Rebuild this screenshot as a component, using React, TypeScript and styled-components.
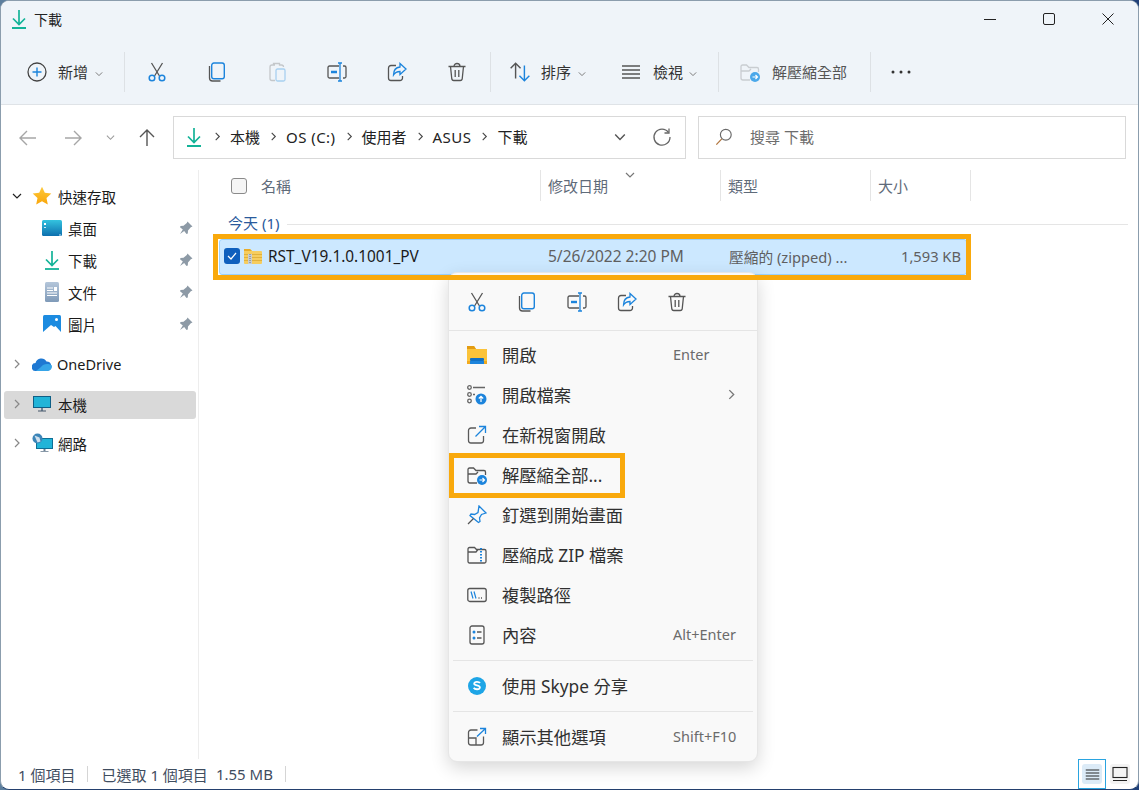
import { ReactNode } from "react";
import styled, { createGlobalStyle } from "styled-components";

const GlobalStyle = createGlobalStyle`
  html, body {
    margin: 0;
    padding: 0;
    height: 790px;
    overflow: hidden;
    background: linear-gradient(90deg, #5d7f9e 0%, #7aa6c4 40%, #1f5fae 70%, #8b9dad 85%, #1f3f78 100%);
  }
  * { box-sizing: border-box; }
  #root {
    font-family: "Noto Sans", "Noto Sans CJK TC", sans-serif;
    color: #1a1a1a;
  }
`;

const Window = styled.div`
  position: relative;
  width: 1139px;
  height: 790px;
  display: flex;
  flex-direction: column;
  background: #fff;
  border-radius: 9px;
  border-top: 1px solid #8b9dad;
  border-left: 1px solid #8b9dad;
  border-right: 1px solid #8b9dad;
  border-bottom: 1px solid #24406e;
  overflow: hidden;
`;

const TopArea = styled.div`
  height: 104px;
  background: #eff4f9;
  border-bottom: 1px solid #dfe3e7;
  display: flex;
  flex-direction: column;
  flex: none;
`;

const TitleBar = styled.div`
  height: 36px;
  display: flex;
  align-items: center;
  padding-left: 8px;
  flex: none;
`;

const TitleText = styled.span`
  font-size: 14px;
  margin-left: 5px;
  margin-top: -1px;
  color: #222;
`;

const WindowControls = styled.div`
  margin-left: auto;
  display: flex;
`;

const WindowControl = styled.div`
  width: 59px;
  height: 36px;
  display: flex;
  align-items: center;
  justify-content: center;
  padding-right: 2px;
`;

const Toolbar = styled.div`
  height: 67px;
  display: flex;
  align-items: center;
  padding-top: 2px;
`;

const Separator = styled.div`
  width: 1px;
  height: 40px;
  background: #dde1e5;
  flex: none;
`;

const LabelButton = styled.div<{ $width: number; $pad: number; $dim?: boolean }>`
  width: ${(p) => p.$width}px;
  padding-left: ${(p) => p.$pad}px;
  display: flex;
  align-items: center;
  font-size: 15px;
  color: ${(p) => (p.$dim ? "#555" : "#333")};
  flex: none;
`;

const LabelText = styled.span<{ $gap: number }>`
  margin-left: ${(p) => p.$gap}px;
  white-space: nowrap;
`;

const IconButton = styled.div<{ $width?: number }>`
  width: ${(p) => p.$width ?? 60}px;
  display: flex;
  justify-content: center;
  align-items: center;
  flex: none;
`;

const IconGroup = styled.div`
  display: flex;
  padding-left: 2px;
  width: 365px;
  flex: none;
`;

const NavRow = styled.div`
  height: 65px;
  flex: none;
  display: flex;
  align-items: center;
`;

const NavButtons = styled.div`
  width: 172px;
  display: flex;
  align-items: center;
  padding-left: 5px;
  flex: none;
`;

const NavButton = styled.div<{ $width: number }>`
  width: ${(p) => p.$width}px;
  display: flex;
  justify-content: center;
  flex: none;
`;

const AddressBar = styled.div`
  width: 513px;
  height: 43px;
  border: 1px solid #d9d9d9;
  display: flex;
  align-items: center;
  padding: 0 13px 2px 10px;
  font-size: 15px;
  flex: none;
`;

const Crumb = styled.span`
  display: flex;
  align-items: center;
  color: #222;
  white-space: nowrap;
`;

const CrumbLatin = styled.span`
  letter-spacing: 0.45px;
`;

const CrumbSep = styled.span`
  display: flex;
  margin: 0 8px 0 9px;
`;

const AddressEnd = styled.div`
  margin-left: auto;
  display: flex;
  align-items: center;
  gap: 26px;
`;

const SearchBox = styled.div`
  width: 428px;
  height: 43px;
  margin-left: 12px;
  border: 1px solid #d9d9d9;
  display: flex;
  align-items: center;
  padding: 0 0 2px 16px;
  font-size: 15px;
  color: #6d6d6d;
  gap: 17px;
  flex: none;
`;

const Main = styled.div`
  flex: 1;
  display: flex;
  min-height: 0;
`;

const Sidebar = styled.div`
  width: 198px;
  border-right: 1px solid #ededed;
  padding: 10px 0 0 3px;
  flex: none;
`;

const TreeRow = styled.div<{ $selected?: boolean; $gapTop?: number; $height?: number }>`
  height: ${(p) => p.$height ?? 32}px;
  margin-top: ${(p) => p.$gapTop ?? 0}px;
  width: 192px;
  border-radius: 3px;
  background: ${(p) => (p.$selected ? "#d9d9d9" : "transparent")};
  padding-bottom: ${(p) => (p.$selected ? 2 : 0)}px;
  display: flex;
  align-items: center;
  font-size: 14.5px;
`;

const Caret = styled.div`
  width: 26px;
  display: flex;
  justify-content: center;
  flex: none;
`;

const TreeIcon = styled.div<{ $indent?: number }>`
  width: 26px;
  margin-left: ${(p) => p.$indent ?? 0}px;
  display: flex;
  justify-content: center;
  flex: none;
`;

const TreeLabel = styled.span<{ $indent?: number }>`
  margin-left: ${(p) => p.$indent ?? 2}px;
  white-space: nowrap;
`;

const PinSlot = styled.div`
  margin-left: auto;
  margin-right: 3px;
  display: flex;
`;

const Content = styled.div`
  flex: 1;
  min-width: 0;
  padding-right: 10px;
`;

const HeaderRow = styled.div`
  height: 31px;
  display: grid;
  grid-template-columns: 342px 180px 150px 100px;
  font-size: 15px;
  color: #5f6b7a;
  position: relative;
`;

const HeaderCell = styled.div<{ $first?: boolean }>`
  display: flex;
  align-items: center;
  padding-left: ${(p) => (p.$first ? 32 : 7)}px;
  border-right: 1px solid #e5e5e5;
  gap: 14px;
`;

const BoxCheck = styled.div`
  width: 16px;
  height: 16px;
  border: 1px solid #8a8a8a;
  border-radius: 3px;
  background: #f5f5f5;
  flex: none;
`;

const SortCaret = styled.div`
  position: absolute;
  left: 426px;
  top: 0;
  display: flex;
`;

const GroupRow = styled.div`
  height: 42px;
  display: flex;
  align-items: center;
  padding-left: 29px;
  font-size: 15px;
  color: #2a5a9c;
  gap: 8px;
`;

const GroupLine = styled.div`
  flex: 1;
  height: 1px;
  background: #e5e5e5;
  margin-top: 4px;
`;

const FileRow = styled.div`
  position: relative;
  margin-left: 20px;
  margin-top: -4px;
  width: 748px;
  height: 36px;
  padding-bottom: 2px;
  background: #cce8ff;
  border: 1px solid #99d1ff;
  border-radius: 3px;
  display: grid;
  grid-template-columns: 328px 181px 142px 1fr;
  align-items: center;
  font-size: 14.7px;
`;

const FileName = styled.div`
  display: flex;
  align-items: center;
  padding-left: 4px;
  color: #1a1a1a;
`;

const FileNameText = styled.span`
  margin-left: 6px;
  font-size: 15.4px;
`;

const FileDate = styled.div`
  color: #5f5f5f;
  font-size: 15.5px;
  white-space: nowrap;
`;

const FileCell = styled.div<{ $right?: boolean }>`
  color: #5f5f5f;
  white-space: nowrap;
  text-align: ${(p) => (p.$right ? "right" : "left")};
  padding-right: ${(p) => (p.$right ? 5 : 0)}px;
`;

const CheckedBox = styled.div`
  width: 16px;
  height: 16px;
  margin-right: 4px;
  border-radius: 3px;
  background: #0f5fbd;
  display: flex;
  align-items: center;
  justify-content: center;
  flex: none;
`;

const Marker = styled.div`
  position: absolute;
  border: 5px solid #f9a90c;
  z-index: 3;
  pointer-events: none;
`;

const RowMarker = styled(Marker)`
  inset: -6px -5px -6px -7px;
`;

const StatusBar = styled.div`
  height: 30px;
  flex: none;
  display: flex;
  align-items: center;
  font-size: 15px;
  color: #3f4d5f;
  padding-left: 17px;
  position: relative;
`;

const StatusDivider = styled.div`
  width: 1px;
  height: 16px;
  background: #d5d5d5;
  margin: 0 13px 0 12px;
`;

const StatusSize = styled.span`
  margin-left: 8px;
`;

const ViewToggles = styled.div`
  margin-left: auto;
  display: flex;
  align-items: center;
  gap: 4px;
  margin-right: 8px;
`;

const ActiveToggle = styled.div`
  width: 28px;
  height: 30px;
  padding: 4px 3px;
  border: 1px solid #2aa4e0;
  display: flex;
`;

const ActiveToggleFill = styled.div`
  flex: 1;
  border-radius: 3px;
  background: #dcebf7;
  display: flex;
  align-items: center;
  justify-content: center;
`;

const PlainToggle = styled.div`
  width: 20px;
  height: 20px;
  border-radius: 3px;
  background: #f3f3f3;
  display: flex;
  align-items: center;
  justify-content: center;
`;

const Menu = styled.div`
  position: absolute;
  left: 447px;
  top: 271px;
  width: 310px;
  height: 490px;
  background: #f9f9f9;
  border: 1px solid #e6e6e6;
  border-radius: 9px;
  box-shadow: 0 6px 18px rgba(0, 0, 0, 0.16);
  z-index: 2;
  display: flex;
  flex-direction: column;
  padding-top: 1px;
`;

const MenuIcons = styled.div`
  height: 57px;
  display: flex;
  align-items: center;
  padding-left: 3px;
  border-bottom: 1px solid #e5e5e5;
  flex: none;
`;

const MenuIconButton = styled.div`
  width: 50px;
  display: flex;
  justify-content: center;
`;

const MenuItem = styled.div<{ $height?: number }>`
  position: relative;
  height: ${(p) => p.$height ?? 40}px;
  display: flex;
  align-items: center;
  padding: 0 19px 0 16px;
  font-size: 17.3px;
  color: #303030;
  flex: none;
`;

const MenuFootItem = styled(MenuItem)`
  padding-bottom: 2px;
`;

const MenuItemIcon = styled.div`
  width: 24px;
  height: 24px;
  display: flex;
  align-items: center;
  justify-content: center;
  margin-right: 13px;
  margin-top: 2px;
  flex: none;
`;

const MenuItemKey = styled.span`
  margin-left: auto;
  width: 65px;
  font-size: 14.5px;
  color: #6b6b6b;
`;

const MenuItemArrow = styled.span`
  margin-left: auto;
  display: flex;
  margin-right: 1px;
`;

const MenuDivider = styled.div`
  height: 1px;
  margin: 0 4px;
  background: #e5e5e5;
  flex: none;
`;

const MenuItemMarker = styled(Marker)`
  left: 0;
  top: -1px;
  width: 176px;
  height: 45px;
`;

const MenuItems = styled.div`
  padding: 3px 0 6px;
  flex: none;
`;

const Ink = { blue: "#1c84dc", grey: "#5a5a5a", teal: "#13b398" };

const Svg = ({ size = 20, children }: { size?: number; children: ReactNode }) => (
  <svg width={size} height={size} viewBox="0 0 20 20" fill="none" strokeWidth="1.3">
    {children}
  </svg>
);

const DownloadIcon = ({ size = 20 }: { size?: number }) => (
  <Svg size={size}>
    <path d="M10 1v14M4 9.500l6 6 6-6" stroke={Ink.teal} strokeWidth="1.700" />
    <path d="M3 19h14" stroke={Ink.teal} strokeWidth="1.800" />
  </Svg>
);

const PlusCircle = () => (
  <Svg>
    <circle cx="10" cy="10" r="9" stroke="#444" />
    <path d="M10 5.500v9M5.500 10h9" stroke={Ink.blue} strokeWidth="1.400" />
  </Svg>
);

const CutIcon = () => (
  <Svg>
    <path d="M4.500 1l8 13M15.500 1l-8 13" stroke="#555" />
    <circle cx="5" cy="16" r="2.800" stroke={Ink.blue} strokeWidth="1.500" />
    <circle cx="15" cy="16" r="2.800" stroke={Ink.blue} strokeWidth="1.500" />
  </Svg>
);

const CopyIcon = () => (
  <Svg>
    <path d="M2.500 4v12a3 3 0 0 0 3 3h8" stroke="#555" />
    <rect x="4.700" y="1" width="12.600" height="15.800" rx="2.200" stroke={Ink.blue} strokeWidth="1.400" />
  </Svg>
);

const PasteIcon = () => (
  <Svg>
    <path d="M8 3H5a2 2 0 0 0-2 2v11.500A2 2 0 0 0 5 18.500h3M6.500 3V1.500h6V3h2a2 2 0 0 1 2 2" stroke="#c4c7ca" />
    <rect x="9" y="7" width="9" height="12" rx="1.500" stroke="#a8d0f0" />
  </Svg>
);

const RenameIcon = () => (
  <Svg>
    <path d="M12 4H2.500A1.500 1.500 0 0 0 1 5.500v9A1.500 1.500 0 0 0 2.500 16H12M16 4h1.500A1.500 1.500 0 0 1 19 5.500v9a1.500 1.500 0 0 1-1.500 1.500H16" stroke="#555" />
    <path d="M4 10h6" stroke={Ink.blue} strokeWidth="2.400" />
    <path d="M11 1h4M13 1v18M11 19h4" stroke={Ink.blue} strokeWidth="1.300" />
  </Svg>
);

const ShareIcon = () => (
  <Svg>
    <path d="M9 3.500H4A2.500 2.500 0 0 0 1.500 6v10A2.500 2.500 0 0 0 4 18.500h9a2.500 2.500 0 0 0 2.500-2.500v-2" stroke="#555" />
    <path d="M13 1.500l6 5.500-6 5.500V9.500c-3 0-5 1-6.500 3.500 0-4.500 2.500-7.500 6.500-8z" stroke={Ink.blue} />
  </Svg>
);

const TrashIcon = () => (
  <Svg>
    <path d="M1.500 4.500h17M7 4.500c0-4 6-4 6 0M3.500 4.500l1.300 12.500a2 2 0 0 0 2 1.500h6.400a2 2 0 0 0 2-1.500l1.300-12.500" stroke="#555" />
    <path d="M8.200 8v7M11.800 8v7" stroke="#555" />
  </Svg>
);

const SortIcon = () => (
  <Svg size={22}>
    <path d="M6 16V2M1.500 6.500L6 2l4.500 4.500" stroke="#555" />
    <path d="M14 4v14M9.500 13.500L14 18l4.500-4.500" stroke={Ink.blue} />
  </Svg>
);

const LinesIcon = ({ size = 20, color = "#555" }: { size?: number; color?: string }) => (
  <Svg size={size}>
    <path d="M1 4h18M1 8h18M1 12h18M1 16h18" stroke={color} />
  </Svg>
);

const ExtractFolder = ({ muted }: { muted?: boolean }) => (
  <Svg>
    <path
      d="M1 16V4.500A1.500 1.500 0 0 1 2.500 3h4l2.500 2.500h8A1.500 1.500 0 0 1 18.500 7v3M1 16a2 2 0 0 0 2 2h7M1 9h8l2-2"
      stroke={muted ? "#c9cdd1" : "#555"}
    />
    <circle cx="15" cy="15" r="5" fill={muted ? "#4ba8ea" : Ink.blue} />
    <path d="M12.500 15h5M15.500 13l2 2-2 2" stroke="#fff" strokeWidth="1.200" />
  </Svg>
);

const Chevron = ({ dir = "down", color = "#555", size = 10 }: { dir?: "down" | "right"; color?: string; size?: number }) => (
  <svg width={size} height={size} viewBox="0 0 10 10" fill="none" stroke={color} strokeWidth="1.200">
    {dir === "down" ? <path d="M1 3l4 4 4-4" /> : <path d="M3 1l4 4-4 4" />}
  </svg>
);

const ArrowIcon = ({ d, color }: { d: string; color: string }) => (
  <Svg>
    <path d={d} stroke={color} strokeWidth="1.400" />
  </Svg>
);

const RefreshIcon = () => (
  <Svg>
    <path d="M16.500 5.500A8 8 0 1 0 18 10" stroke="#666" strokeWidth="1.300" />
    <path d="M17 1.500v4.500h-4.500" stroke="#666" strokeWidth="1.300" />
  </Svg>
);

const SearchIcon = () => (
  <Svg size={18}>
    <circle cx="12" cy="7.500" r="6" stroke="#6a6a6a" />
    <path d="M7.500 12L1.500 18.500" stroke="#b0743c" />
  </Svg>
);

const StarIcon = () => (
  <svg width="20" height="20" viewBox="0 0 20 20">
    <defs>
      <linearGradient id="starFill" x1="0" y1="0" x2="0" y2="1">
        <stop offset="0" stopColor="#fdc93a" />
        <stop offset="1" stopColor="#f9a60b" />
      </linearGradient>
    </defs>
    <path d="M10 .8l2.800 6 6.500.8-4.800 4.500 1.300 6.500L10 15.300 4.200 18.600l1.300-6.500L.7 7.600l6.500-.8z" fill="url(#starFill)" />
  </svg>
);

const DesktopIcon = () => (
  <svg width="20" height="16" viewBox="0 0 20 16">
    <defs>
      <linearGradient id="deskFill" x1="0" y1="0" x2="0" y2="1">
        <stop offset="0" stopColor="#34c3df" />
        <stop offset="1" stopColor="#0d6fae" />
      </linearGradient>
    </defs>
    <rect width="20" height="16" rx="1.500" fill="url(#deskFill)" />
    <rect x="2" y="3" width="2" height="2" fill="#fff" />
    <rect x="2" y="7" width="2" height="1" fill="#cdeaf5" />
    <rect x="17" y="14.500" width="2" height="1" fill="#cdeaf5" />
  </svg>
);

const DocIcon = () => (
  <svg width="14" height="20" viewBox="0 0 14 20">
    <defs>
      <linearGradient id="docFill" x1="0" y1="0" x2="0" y2="1">
        <stop offset="0" stopColor="#b4c6da" />
        <stop offset="1" stopColor="#7f9ab8" />
      </linearGradient>
    </defs>
    <rect width="14" height="20" rx="1.500" fill="url(#docFill)" />
    <path d="M2 6h6M2 8.500h6M2 11h10M2 13.500h10" stroke="#fff" strokeWidth="1" />
    <rect x="9" y="5" width="3" height="4" fill="#fff" />
  </svg>
);

const PictureIcon = () => (
  <svg width="18" height="18" viewBox="0 0 18 18">
    <rect width="18" height="18" rx="1.500" fill="#1c8be0" />
    <path d="M0 17l8-7 3 2 1.500-1 5.500 6v1H0z" fill="#fff" />
    <circle cx="13.500" cy="4.500" r="1.500" fill="#fff" />
  </svg>
);

const CloudIcon = () => (
  <svg width="20" height="14" viewBox="0 0 20 14">
    <path d="M4 14a4 4 0 0 1-.5-8A6 6 0 0 1 14.500 4.500 4.800 4.800 0 0 1 15.500 14z" fill="#1e78d2" />
    <path d="M4 14h11.500a4.500 4.500 0 0 0 4.300-5.500C16 6 11 7 9 10z" fill="#36a5e8" />
  </svg>
);

const MonitorIcon = () => (
  <svg width="18" height="16" viewBox="0 0 18 16">
    <rect width="18" height="12" fill="#0f5f86" />
    <rect x="1" y="1" width="16" height="10" fill="#22b4d8" />
    <rect x="8" y="12" width="2" height="3" fill="#6d8296" />
    <rect x="5" y="14.500" width="8" height="1" fill="#44576a" />
  </svg>
);

const NetworkIcon = () => (
  <svg width="21" height="20" viewBox="0 0 21 20">
    <rect x="4" y="5" width="17" height="11" fill="#0f6f96" />
    <rect x="5" y="6" width="15" height="9" fill="#22b4d8" />
    <rect x="11.500" y="16" width="2" height="2.500" fill="#6d8296" />
    <rect x="8.500" y="18" width="8" height="1" fill="#8899a8" />
    <circle cx="5.500" cy="5.500" r="5" fill="#3c85b8" />
    <path d="M2.500 2.500l5 2 1 4-3 1z" fill="#cfe0ee" />
  </svg>
);

const PinIcon = () => (
  <svg width="14" height="14" viewBox="0 0 14 14">
    <path d="M8.500.5l5 5-1.700.7-2.800 3.300-.2 3-1.300.5-2.300-2.900L1 13l2.800-4.400L1 6.300l.5-1.300 3-.2 3.300-2.800z" fill="#8d9aa6" />
  </svg>
);

const ZipFolderIcon = () => (
  <svg width="18" height="15" viewBox="0 0 18 15">
    <path d="M0 1a1 1 0 0 1 1-1h5l2 2h9a1 1 0 0 1 1 1v11a1 1 0 0 1-1 1H1a1 1 0 0 1-1-1z" fill="#f6cd5f" />
    <path d="M0 0h6l2 2H0z" fill="#e8ac2a" />
    <path d="M0 5.500h18M0 8.500h18M0 11.500h18" stroke="#d8a52e" strokeWidth=".7" />
    <rect x="4" y="5" width="4" height="10" fill="#c9cdd0" />
    <path d="M6 5v10" stroke="#6e7276" strokeDasharray="1 1" />
  </svg>
);

const OpenFolderIcon = () => (
  <svg width="20" height="18" viewBox="0 0 20 18">
    <path d="M0 1a1 1 0 0 1 1-1h6l2 3h11v14a1 1 0 0 1-1 1H0z" fill="#fbc33a" />
    <path d="M0 0h7l2 3H0z" fill="#e39c12" />
    <rect x="3" y="12" width="14" height="3" rx="1" fill="#1170c4" />
    <rect x="0" y="15" width="20" height="3" fill="#f2aa1e" />
    <rect x="3" y="15" width="14" height="3" fill="#1c84dc" />
  </svg>
);

const OpenWithIcon = () => (
  <Svg>
    <path d="M6 2.500h12M6 9.500h2" stroke="#666" />
    <circle cx="2.500" cy="2.500" r="1.800" stroke="#666" />
    <circle cx="2.500" cy="9.500" r="1.800" stroke="#666" />
    <circle cx="2.500" cy="16" r="1.800" stroke="#666" />
    <circle cx="14" cy="14" r="5.500" fill={Ink.blue} />
    <path d="M14 17v-5.500M11.800 13.500l2.200-2.200 2.200 2.200" stroke="#fff" strokeWidth="1.200" />
  </Svg>
);

const NewWindowIcon = () => (
  <Svg>
    <path d="M9 3H4a2.500 2.500 0 0 0-2.500 2.500v10A2.500 2.500 0 0 0 4 18h10a2.500 2.500 0 0 0 2.500-2.500V11" stroke="#5a5a5a" />
    <path d="M8.500 11.500L18 2M12 1.500h6.500V8" stroke={Ink.blue} />
  </Svg>
);

const PinOutlineIcon = () => (
  <Svg>
    <path d="M12 1l7 7-4.500 1.500-2 3.500.5 3.500-1.500 1L3 10.500l1-1.500 3.500.5 3.500-2z" stroke={Ink.blue} />
    <path d="M6.500 13.500L1 19" stroke="#555" />
  </Svg>
);

const ZipMenuIcon = () => (
  <Svg>
    <path d="M1 16.500V4A1.500 1.500 0 0 1 2.500 2.500h5l2 2h8A1.500 1.500 0 0 1 19 6v10.500A1.500 1.500 0 0 1 17.500 18h-15A1.500 1.500 0 0 1 1 16.500zM1 7h8l2-2.500" stroke="#555" />
    <path d="M14 3v15" stroke={Ink.blue} strokeWidth="2" strokeDasharray="1.500 1.500" />
  </Svg>
);

const CopyPathIcon = () => (
  <Svg>
    <rect x=".8" y="3.500" width="18.400" height="13" rx="2" stroke="#555" />
    <path d="M4 6.500l2 7M7 6.500l2 7" stroke={Ink.blue} strokeWidth="1.200" />
    <path d="M11.500 13h1M14 13h1" stroke="#555" strokeWidth="1.300" />
  </Svg>
);

const PropsIcon = () => (
  <Svg>
    <rect x="3" y="1" width="14" height="18" rx="2" stroke="#555" />
    <circle cx="7" cy="7" r="1.500" fill={Ink.blue} />
    <circle cx="7" cy="13" r="1.500" fill={Ink.blue} />
    <path d="M10 7h4.500M10 13h4.500" stroke="#555" />
  </Svg>
);

const SkypeIcon = () => (
  <svg width="20" height="20" viewBox="0 0 20 20">
    <circle cx="10" cy="10" r="9" fill="#1ea5e6" />
    <path d="M13 7c-1-1.500-5.500-1.800-5.800.5-.2 2.400 5.800 1.300 5.700 4-.2 2.300-5 2.300-6.200.3" stroke="#fff" strokeWidth="1.800" fill="none" />
  </svg>
);

const MoreIcon = () => (
  <Svg>
    <path d="M10.500 3H4a2.500 2.500 0 0 0-2.500 2.500v10A2.500 2.500 0 0 0 4 18h10a2.500 2.500 0 0 0 2.500-2.500V9.500M1.500 11H9v7" stroke="#5a5a5a" />
    <path d="M10 9.500L18 2M13 1.500h5.500V7" stroke={Ink.blue} />
  </Svg>
);

const sidebarPinned = [
  { icon: <DesktopIcon />, label: "桌面" },
  { icon: <DownloadIcon />, label: "下載" },
  { icon: <DocIcon />, label: "文件" },
  { icon: <PictureIcon />, label: "圖片" },
];

const menuMain: { icon: ReactNode; label: string; key?: string; arrow?: boolean; mark?: boolean }[] = [
  { icon: <OpenFolderIcon />, label: "開啟", key: "Enter" },
  { icon: <OpenWithIcon />, label: "開啟檔案", arrow: true },
  { icon: <NewWindowIcon />, label: "在新視窗開啟" },
  { icon: <ExtractFolder />, label: "解壓縮全部...", mark: true },
  { icon: <PinOutlineIcon />, label: "釘選到開始畫面" },
  { icon: <ZipMenuIcon />, label: "壓縮成 ZIP 檔案" },
  { icon: <CopyPathIcon />, label: "複製路徑" },
  { icon: <PropsIcon />, label: "內容", key: "Alt+Enter" },
];

const crumbs = [
  { label: "本機" },
  { label: "OS (C:)", latin: true },
  { label: "使用者" },
  { label: "ASUS", latin: true },
  { label: "下載" },
];

export default function App() {
  return (
    <Window>
      <GlobalStyle />
      <TopArea>
        <TitleBar>
          <DownloadIcon />
          <TitleText>下載</TitleText>
          <WindowControls>
            <WindowControl>
              <svg width="12" height="12" viewBox="0 0 12 12" stroke="#222" strokeWidth="1">
                <path d="M0 6.500h12" />
              </svg>
            </WindowControl>
            <WindowControl>
              <svg width="12" height="12" viewBox="0 0 12 12" fill="none" stroke="#222" strokeWidth="1">
                <rect x=".5" y=".5" width="11" height="11" rx="1.500" />
              </svg>
            </WindowControl>
            <WindowControl>
              <svg width="12" height="12" viewBox="0 0 12 12" stroke="#222" strokeWidth="1">
                <path d="M.5.500l11 11M11.500.500l-11 11" />
              </svg>
            </WindowControl>
          </WindowControls>
        </TitleBar>
        <Toolbar>
          <LabelButton $width={123} $pad={26}>
            <PlusCircle />
            <LabelText $gap={11}>新增</LabelText>
            <LabelText $gap={7}>
              <Chevron size={8} color="#777" />
            </LabelText>
          </LabelButton>
          <Separator />
          <IconGroup>
            <IconButton><CutIcon /></IconButton>
            <IconButton><CopyIcon /></IconButton>
            <IconButton><PasteIcon /></IconButton>
            <IconButton><RenameIcon /></IconButton>
            <IconButton><ShareIcon /></IconButton>
            <IconButton><TrashIcon /></IconButton>
          </IconGroup>
          <Separator />
          <LabelButton $width={113} $pad={18}>
            <SortIcon />
            <LabelText $gap={10}>排序</LabelText>
            <LabelText $gap={7}>
              <Chevron size={8} color="#777" />
            </LabelText>
          </LabelButton>
          <LabelButton $width={114} $pad={17}>
            <LinesIcon />
            <LabelText $gap={12}>檢視</LabelText>
            <LabelText $gap={6}>
              <Chevron size={8} color="#777" />
            </LabelText>
          </LabelButton>
          <Separator />
          <LabelButton $width={151} $pad={21} $dim>
            <ExtractFolder muted />
            <LabelText $gap={12}>解壓縮全部</LabelText>
          </LabelButton>
          <Separator />
          <IconButton>
            <svg width="20" height="4" viewBox="0 0 20 4" fill="#333">
              <circle cx="2" cy="2" r="1.500" />
              <circle cx="10" cy="2" r="1.500" />
              <circle cx="18" cy="2" r="1.500" />
            </svg>
          </IconButton>
        </Toolbar>
      </TopArea>
      <NavRow>
        <NavButtons>
          <NavButton $width={44}>
            <ArrowIcon d="M18 10H2M9 3l-7 7 7 7" color="#a6a6a6" />
          </NavButton>
          <NavButton $width={46}>
            <ArrowIcon d="M2 10h16M11 3l7 7-7 7" color="#a6a6a6" />
          </NavButton>
          <NavButton $width={28}>
            <Chevron size={9} color="#9a9a9a" />
          </NavButton>
          <NavButton $width={46}>
            <ArrowIcon d="M10 18V2M3 9l7-7 7 7" color="#555" />
          </NavButton>
        </NavButtons>
        <AddressBar>
          <DownloadIcon />
          <CrumbSep><Chevron dir="right" size={9} color="#444" /></CrumbSep>
          {crumbs.map((c, i) => (
            <Crumb key={c.label}>
              {c.latin ? <CrumbLatin>{c.label}</CrumbLatin> : c.label}
              {i < crumbs.length - 1 && (
                <CrumbSep><Chevron dir="right" size={9} color="#444" /></CrumbSep>
              )}
            </Crumb>
          ))}
          <AddressEnd>
            <Chevron size={12} color="#555" />
            <RefreshIcon />
          </AddressEnd>
        </AddressBar>
        <SearchBox>
          <SearchIcon />
          <span>搜尋 下載</span>
        </SearchBox>
      </NavRow>
      <Main>
        <Sidebar>
          <TreeRow>
            <Caret><Chevron size={10} color="#222" /></Caret>
            <TreeIcon $indent={-1}><StarIcon /></TreeIcon>
            <TreeLabel $indent={3}>快速存取</TreeLabel>
          </TreeRow>
          {sidebarPinned.map((s) => (
            <TreeRow key={s.label}>
              <TreeIcon $indent={35}>{s.icon}</TreeIcon>
              <TreeLabel $indent={3}>{s.label}</TreeLabel>
              <PinSlot><PinIcon /></PinSlot>
            </TreeRow>
          ))}
          <TreeRow $gapTop={8}>
            <Caret><Chevron dir="right" size={10} color="#888" /></Caret>
            <TreeIcon $indent={-1}><CloudIcon /></TreeIcon>
            <TreeLabel>OneDrive</TreeLabel>
          </TreeRow>
          <TreeRow $gapTop={11} $height={28} $selected>
            <Caret><Chevron dir="right" size={10} color="#888" /></Caret>
            <TreeIcon $indent={-1}><MonitorIcon /></TreeIcon>
            <TreeLabel $indent={3}>本機</TreeLabel>
          </TreeRow>
          <TreeRow $gapTop={8}>
            <Caret><Chevron dir="right" size={10} color="#888" /></Caret>
            <TreeIcon $indent={-1}><NetworkIcon /></TreeIcon>
            <TreeLabel $indent={3}>網路</TreeLabel>
          </TreeRow>
        </Sidebar>
        <Content>
          <HeaderRow>
            <HeaderCell $first>
              <BoxCheck />
              <span>名稱</span>
            </HeaderCell>
            <HeaderCell>修改日期</HeaderCell>
            <HeaderCell>類型</HeaderCell>
            <HeaderCell>大小</HeaderCell>
            <SortCaret><Chevron size={10} color="#777" /></SortCaret>
          </HeaderRow>
          <GroupRow>
            <span>今天 (1)</span>
            <GroupLine />
          </GroupRow>
          <FileRow>
            <FileName>
              <CheckedBox>
                <svg width="10" height="8" viewBox="0 0 10 8" fill="none" stroke="#fff" strokeWidth="1.200">
                  <path d="M1 4l3 3 5-6" />
                </svg>
              </CheckedBox>
              <ZipFolderIcon />
              <FileNameText>RST_V19.1.0.1001_PV</FileNameText>
            </FileName>
            <FileDate>5/26/2022 2:20 PM</FileDate>
            <FileCell>壓縮的 (zipped) ...</FileCell>
            <FileCell $right>1,593 KB</FileCell>
            <RowMarker />
          </FileRow>
        </Content>
      </Main>
      <StatusBar>
        <span>1 個項目</span>
        <StatusDivider />
        <span>已選取 1 個項目</span>
        <StatusSize>1.55 MB</StatusSize>
        <StatusDivider />
        <ViewToggles>
          <ActiveToggle>
            <ActiveToggleFill><LinesIcon size={15} color="#222" /></ActiveToggleFill>
          </ActiveToggle>
          <PlainToggle>
            <svg width="16" height="16" viewBox="0 0 16 16" fill="none" stroke="#222" strokeWidth="1.100">
              <rect x="1" y="1.500" width="14" height="10" />
              <path d="M1 14.500h14" />
            </svg>
          </PlainToggle>
        </ViewToggles>
      </StatusBar>
      <Menu>
        <MenuIcons>
          <MenuIconButton><CutIcon /></MenuIconButton>
          <MenuIconButton><CopyIcon /></MenuIconButton>
          <MenuIconButton><RenameIcon /></MenuIconButton>
          <MenuIconButton><ShareIcon /></MenuIconButton>
          <MenuIconButton><TrashIcon /></MenuIconButton>
        </MenuIcons>
        <MenuItems>
          {menuMain.map((m) => (
            <MenuItem key={m.label}>
              <MenuItemIcon>{m.icon}</MenuItemIcon>
              <span>{m.label}</span>
              {m.key && <MenuItemKey>{m.key}</MenuItemKey>}
              {m.arrow && <MenuItemArrow><Chevron dir="right" size={11} color="#777" /></MenuItemArrow>}
              {m.mark && <MenuItemMarker />}
            </MenuItem>
          ))}
        </MenuItems>
        <MenuDivider />
        <MenuFootItem $height={50}>
          <MenuItemIcon><SkypeIcon /></MenuItemIcon>
          <span>使用 Skype 分享</span>
        </MenuFootItem>
        <MenuDivider />
        <MenuFootItem $height={50}>
          <MenuItemIcon><MoreIcon /></MenuItemIcon>
          <span>顯示其他選項</span>
          <MenuItemKey>Shift+F10</MenuItemKey>
        </MenuFootItem>
      </Menu>
    </Window>
  );
}
